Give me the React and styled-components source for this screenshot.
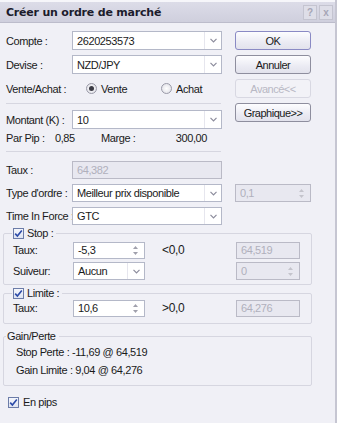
import React from "react";
import styled, { createGlobalStyle } from "styled-components";

const GlobalStyle = createGlobalStyle`
  html, body {
    margin: 0;
    padding: 0;
    background: #f0f0f6;
  }
  body {
    font-family: "Liberation Sans", Arial, sans-serif;
    font-size: 11px;
    letter-spacing: -0.4px;
    color: #1a1a1a;
  }
`;

const Dialog = styled.div`
  width: 337px;
  height: 423px;
  box-sizing: border-box;
  background: #f0f0f6;
  border-right: 2px solid #c6c6d2;
  overflow: hidden;
`;

const TitleBar = styled.div`
  height: 20px;
  border-top: 2px solid #f6f6fa;
  border-bottom: 1px solid #bcbccb;
  background: linear-gradient(#dcdce8, #cfcfdd);
  display: flex;
  align-items: center;
  justify-content: space-between;
  padding: 0 2px 0 6px;
`;

const Title = styled.span`
  font-family: "DejaVu Sans", Verdana, sans-serif;
  font-weight: bold;
  font-size: 11px;
  letter-spacing: -0.2px;
  color: #1c1c2c;
`;

const TitleButtons = styled.div`
  display: flex;
  gap: 2px;
`;

const TitleButton = styled.div`
  width: 14px;
  height: 15px;
  box-sizing: border-box;
  border: 1px solid #c4c4d0;
  background: #dedee8;
  color: #a6a6b6;
  font-weight: bold;
  font-size: 10px;
  letter-spacing: 0;
  display: flex;
  align-items: center;
  justify-content: center;
`;

const Body = styled.div`
  padding: 8px 0 0 0;
`;

const TopSection = styled.div`
  display: flex;
  align-items: flex-start;
`;

const LeftCol = styled.div`
  width: 222px;
  padding-left: 6px;
  box-sizing: border-box;
  display: flex;
  flex-direction: column;
`;

const RightCol = styled.div`
  display: flex;
  flex-direction: column;
  gap: 5px;
  margin-left: 13px;
  width: 76px;
`;

const Row = styled.div`
  display: grid;
  grid-template-columns: 66px auto;
  align-items: center;
  height: 19px;
  margin-top: ${(p) => p.$mt || 0}px;
`;

const Label = styled.span`
  white-space: nowrap;
`;

const Field = styled.div`
  height: ${(p) => p.$h || 19}px;
  width: ${(p) => p.$w || 150}px;
  box-sizing: border-box;
  border: 1px solid ${(p) => (p.$disabled ? "#babac6" : "#b4b8c8")};
  background: ${(p) => (p.$disabled ? "#e8e8f0" : "#ffffff")};
  color: ${(p) => (p.$disabled ? "#b0b0bc" : "#1a1a1a")};
  display: flex;
  align-items: center;
  padding-left: 4px;
`;

const FieldText = styled.span`
  flex: 1;
  white-space: nowrap;
`;

const ArrowBox = styled.div`
  width: 16px;
  height: 100%;
  border-left: 1px solid #e6e6ee;
  display: flex;
  align-items: center;
  justify-content: center;
`;

const SpinBox = styled.div`
  width: 12px;
  height: 100%;
  display: flex;
  flex-direction: column;
  align-items: center;
  justify-content: center;
  gap: 3px;
  margin-right: 3px;
`;

const Separator = styled.div`
  height: 1px;
  background: #d6d6e0;
  margin-top: ${(p) => p.$mt || 0}px;
  width: 215px;
`;

const Button = styled.div`
  height: 19px;
  box-sizing: border-box;
  border: 1px solid ${(p) => (p.$disabled ? "#d8d8e2" : p.$default ? "#8a8ac4" : "#8e8e9e")};
  border-radius: 3px;
  background: ${(p) =>
    p.$disabled ? "#f2f2f7" : "linear-gradient(#fdfdff, #ebebf3 60%, #e2e2ec)"};
  color: ${(p) => (p.$disabled ? "#b8b8c4" : "#1a1a1a")};
  display: flex;
  align-items: center;
  justify-content: center;
  letter-spacing: -0.5px;
`;

const RadioGroup = styled.div`
  display: flex;
  align-items: center;
`;

const RadioItem = styled.div`
  display: flex;
  align-items: center;
  gap: 4px;
  box-sizing: border-box;
  width: ${(p) => p.$w || 75}px;
  padding-left: ${(p) => p.$pl || 0}px;
`;

const RadioDot = styled.div`
  width: 11px;
  height: 11px;
  box-sizing: border-box;
  border-radius: 50%;
  border: 1px solid #9a9aa8;
  background: radial-gradient(#ffffff, #dcdce4);
  display: flex;
  align-items: center;
  justify-content: center;
  &::after {
    content: "";
    display: ${(p) => (p.$on ? "block" : "none")};
    width: 5px;
    height: 5px;
    border-radius: 50%;
    background: #3a3a44;
  }
`;

const InfoRow = styled.div`
  display: flex;
  align-items: center;
  height: 14px;
  margin-top: 2px;
`;

const InfoCell = styled.span`
  width: ${(p) => p.$w}px;
  text-align: ${(p) => p.$align || "left"};
  white-space: nowrap;
`;

const Lower = styled.div`
  padding: 0 0 0 6px;
`;

const WideRow = styled.div`
  display: flex;
  align-items: center;
  height: 18px;
  margin-top: ${(p) => p.$mt || 0}px;
`;

const WideLabel = styled.span`
  width: 66px;
  white-space: nowrap;
`;

const Spacer = styled.div`
  width: ${(p) => p.$w}px;
  flex-shrink: 0;
`;

const Group = styled.fieldset`
  margin: ${(p) => p.$mt || 0}px 0 0 -3px;
  width: 309px;
  box-sizing: border-box;
  border: 1px solid #d6d6e0;
  border-radius: 2px;
  padding: ${(p) => p.$pad || "0"};
`;

const Legend = styled.legend`
  padding: 0 3px 0 1px;
  margin-left: ${(p) => p.$ml ?? 8}px;
  display: flex;
  align-items: center;
  gap: 3px;
  line-height: 12px;
`;

const Check = styled.div`
  width: 11px;
  height: 11px;
  box-sizing: border-box;
  border: 1px solid #6c7ca8;
  background: linear-gradient(#f4f6fc, #dfe4f2);
  display: flex;
  align-items: center;
  justify-content: center;
`;

const GroupRow = styled.div`
  display: flex;
  align-items: center;
  height: 18px;
  margin-top: ${(p) => p.$mt || 0}px;
`;

const GroupLabel = styled.span`
  width: 60px;
  padding-left: 9px;
  white-space: nowrap;
`;

const Hint = styled.span`
  width: 91px;
  padding-left: 17px;
  box-sizing: border-box;
  font-size: 12px;
  letter-spacing: -0.3px;
`;

const ResultLine = styled.div`
  padding-left: 12px;
  height: 18px;
  display: flex;
  align-items: center;
  margin-top: ${(p) => p.$mt || 0}px;
`;

const PipsRow = styled.div`
  display: flex;
  align-items: center;
  gap: 4px;
  margin: 10px 0 0 8px;
`;

const Chevron = () => (
  <svg width="7" height="5" viewBox="0 0 7 5">
    <polyline points="0.5,0.8 3.5,3.8 6.5,0.8" fill="none" stroke="#8c8c9c" strokeWidth="1.2" />
  </svg>
);

const SpinArrows = ({ disabled }) => (
  <SpinBox>
    <svg width="5" height="3" viewBox="0 0 5 3">
      <polygon points="0,3 2.5,0 5,3" fill={disabled ? "#c4c4cc" : "#a0a0ac"} />
    </svg>
    <svg width="5" height="3" viewBox="0 0 5 3">
      <polygon points="0,0 2.5,3 5,0" fill={disabled ? "#c4c4cc" : "#a0a0ac"} />
    </svg>
  </SpinBox>
);

const Tick = () => (
  <svg width="9" height="9" viewBox="0 0 9 9">
    <polyline points="1.2,4.6 3.4,7 7.8,1.6" fill="none" stroke="#2b4aa8" strokeWidth="1.6" />
  </svg>
);

const Combo = ({ value, w, h }) => (
  <Field $w={w} $h={h}>
    <FieldText>{value}</FieldText>
    <ArrowBox>
      <Chevron />
    </ArrowBox>
  </Field>
);

const Spin = ({ value, w, h, disabled }) => (
  <Field $w={w} $h={h} $disabled={disabled}>
    <FieldText>{value}</FieldText>
    <SpinArrows disabled={disabled} />
  </Field>
);

export default function App() {
  return (
    <>
      <GlobalStyle />
      <Dialog>
        <TitleBar>
          <Title>Créer un ordre de marché</Title>
          <TitleButtons>
            <TitleButton>?</TitleButton>
            <TitleButton>x</TitleButton>
          </TitleButtons>
        </TitleBar>
        <Body>
          <TopSection>
            <LeftCol>
              <Row>
                <Label>Compte :</Label>
                <Combo value="2620253573" />
              </Row>
              <Row $mt={5}>
                <Label>Devise :</Label>
                <Combo value="NZD/JPY" />
              </Row>
              <Row $mt={5}>
                <Label>Vente/Achat :</Label>
                <RadioGroup>
                  <RadioItem $w={89} $pl={14}>
                    <RadioDot $on />
                    <span>Vente</span>
                  </RadioItem>
                  <RadioItem>
                    <RadioDot />
                    <span>Achat</span>
                  </RadioItem>
                </RadioGroup>
              </Row>
              <Separator $mt={5} />
              <Row $mt={6}>
                <Label>Montant (K) :</Label>
                <Combo value="10" />
              </Row>
              <InfoRow>
                <InfoCell $w={49}>Par Pip :</InfoCell>
                <InfoCell $w={46}>0,85</InfoCell>
                <InfoCell $w={60}>Marge :</InfoCell>
                <InfoCell $w={46} $align="right">300,00</InfoCell>
              </InfoRow>
              <Separator $mt={6} />
            </LeftCol>
            <RightCol>
              <Button $default>OK</Button>
              <Button>Annuler</Button>
              <Button $disabled>Avancé&lt;&lt;</Button>
              <Button>Graphique&gt;&gt;</Button>
            </RightCol>
          </TopSection>
          <Lower>
            <WideRow $mt={9}>
              <WideLabel>Taux :</WideLabel>
              <Field $w={150} $h={18} $disabled>
                <FieldText>64,382</FieldText>
              </Field>
            </WideRow>
            <WideRow $mt={5}>
              <WideLabel>Type d'ordre :</WideLabel>
              <Combo value="Meilleur prix disponible" h={18} />
              <Spacer $w={13} />
              <Spin value="0,1" w={76} h={18} disabled />
            </WideRow>
            <WideRow $mt={5}>
              <WideLabel>Time In Force :</WideLabel>
              <Combo value="GTC" h={18} />
            </WideRow>
            <Group $mt={2} $pad="0 0 4px 0">
              <Legend>
                <Check>
                  <Tick />
                </Check>
                <span>Stop :</span>
              </Legend>
              <GroupRow $mt={2}>
                <GroupLabel>Taux:</GroupLabel>
                <Spin value="-5,3" w={72} h={17} />
                <Hint>&lt;0,0</Hint>
                <Field $w={64} $h={17} $disabled>
                  <FieldText>64,519</FieldText>
                </Field>
              </GroupRow>
              <GroupRow $mt={3}>
                <GroupLabel>Suiveur:</GroupLabel>
                <Combo value="Aucun" w={72} h={18} />
                <Spacer $w={91} />
                <Spin value="0" w={64} h={18} disabled />
              </GroupRow>
            </Group>
            <Group $mt={2} $pad="0 0 6px 0">
              <Legend>
                <Check>
                  <Tick />
                </Check>
                <span>Limite :</span>
              </Legend>
              <GroupRow>
                <GroupLabel>Taux:</GroupLabel>
                <Spin value="10,6" w={72} h={17} />
                <Hint>&gt;0,0</Hint>
                <Field $w={64} $h={17} $disabled>
                  <FieldText>64,276</FieldText>
                </Field>
              </GroupRow>
            </Group>
            <Group $mt={6} $pad="0 0 6px 0">
              <Legend $ml={2}>Gain/Perte</Legend>
              <ResultLine $mt={1}>Stop Perte : -11,69 @ 64,519</ResultLine>
              <ResultLine>Gain Limite : 9,04 @ 64,276</ResultLine>
            </Group>
          </Lower>
          <PipsRow>
            <Check>
              <Tick />
            </Check>
            <span>En pips</span>
          </PipsRow>
        </Body>
      </Dialog>
    </>
  );
}
